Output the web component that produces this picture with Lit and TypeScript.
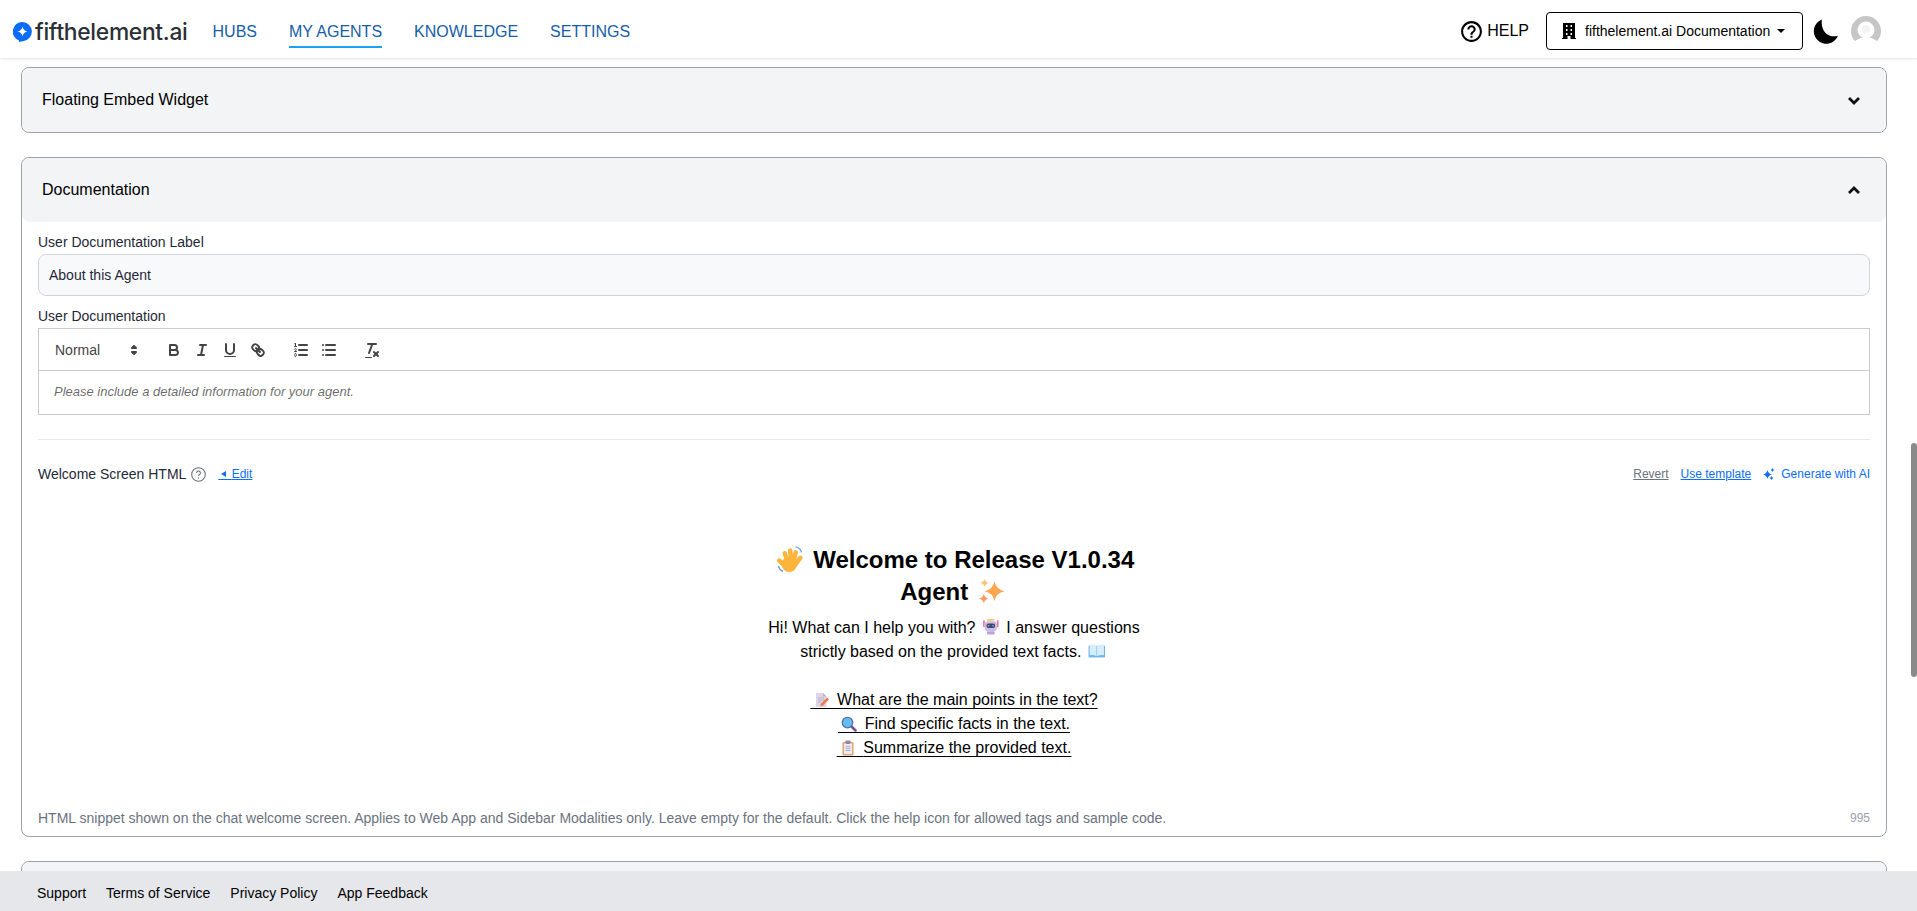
import { LitElement, html, css } from "lit";
import { customElement } from "lit/decorators.js";

const star = (cx: number, cy: number, r: number) => {
  const k = r * 0.16;
  return `M${cx} ${cy - r}Q${cx + k} ${cy - k} ${cx + r} ${cy}Q${cx + k} ${cy + k} ${cx} ${cy + r}Q${cx - k} ${cy + k} ${cx - r} ${cy}Q${cx - k} ${cy - k} ${cx} ${cy - r}Z`;
};

const waveEmoji = html`<svg viewBox="2 1 28 29">
  <g fill="none" stroke="#fbb53c" stroke-width="5" stroke-linecap="round">
    <path d="M9 22 4 17M13 17 10 9M17 16 16 6M20 17 22 8M22 21 27 14" />
  </g>
  <circle cx="15" cy="21" r="8.5" fill="#fbb53c" />
  <path d="M22 2q5 1 6.5 6M3 23q1 4 5 6" fill="none" stroke="#6fa8dc" stroke-width="1.6" />
</svg>`;

const sparkleEmoji = html`<svg viewBox="0 0 32 32">
  <path d=${star(20, 16, 12)} fill="#ffa64d" />
  <path d=${star(8, 6, 5)} fill="#ffc46b" />
  <path d=${star(7, 25, 6)} fill="#ff9a66" />
</svg>`;

const robotEmoji = html`<svg viewBox="0 0 32 32">
  <rect x="2" y="4" width="3" height="13" rx="1.5" fill="#ef6c9b" />
  <rect x="27" y="4" width="3" height="13" rx="1.5" fill="#ef6c9b" />
  <rect x="9" y="2" width="14" height="3" rx="1.5" fill="#f5c95c" />
  <rect x="5" y="6" width="22" height="18" rx="6" fill="#cdbbe6" />
  <rect x="8" y="10" width="16" height="8" rx="4" fill="#3d4a6b" />
  <circle cx="12" cy="14" r="1.4" fill="#7fd0f5" />
  <circle cx="20" cy="14" r="1.4" fill="#7fd0f5" />
  <rect x="9" y="24" width="14" height="6" rx="2" fill="#b8a6d8" />
</svg>`;

const bookEmoji = html`<svg viewBox="0 0 32 32">
  <path d="M1 7h30v21H1z" fill="#6fb4ea" />
  <path d="M3 5q8-1 12.5 2v19Q11 23 3 24zM29 5q-8-1-12.5 2v19q4.500-3 12.500-2z" fill="#d6edfb" />
</svg>`;

const memoEmoji = html`<svg viewBox="0 0 32 32">
  <path d="M6 2h14l7 7v21H6z" fill="#dcd6e8" />
  <path d="M20 2v7h7z" fill="#b9afd0" />
  <path d="M10 12h12M10 16h12M10 20h6" stroke="#b0a8c4" stroke-width="1.5" />
  <path d="M30 13 16 27" stroke="#f4794a" stroke-width="5" />
  <path d="m13 30 1.500-5 3.500 3.500z" fill="#f7c59f" />
</svg>`;

const searchEmoji = html`<svg viewBox="0 0 32 32">
  <path d="m20 20 9 9" stroke="#76508f" stroke-width="5" stroke-linecap="round" />
  <circle cx="13" cy="13" r="10.500" fill="#62bdf0" stroke="#5d6fa8" stroke-width="2.500" />
</svg>`;

const clipboardEmoji = html`<svg viewBox="0 0 32 32">
  <rect x="5" y="4" width="22" height="27" rx="2" fill="#e3a36f" />
  <rect x="8" y="7" width="16" height="21" fill="#eceaf2" />
  <rect x="11" y="1" width="10" height="7" rx="2" fill="#8d8aa0" />
  <path d="M11 13h10M11 17h10M11 21h10" stroke="#9a98b0" stroke-width="1.500" />
</svg>`;

const chevronDown = html`<svg class="chevron" viewBox="0 0 14 9"><path d="m2 2 5 5 5-5" /></svg>`;
const chevronUp = html`<svg class="chevron" viewBox="0 0 14 9"><path d="m2 7 5-5 5 5" /></svg>`;

@customElement("app-root")
export class AppRoot extends LitElement {
  static override styles = css`
    :host {
      display: flex;
      flex-direction: column;
      height: 100vh;
      overflow: hidden;
      font-family: "Liberation Sans", Arial, sans-serif;
      font-size: 14px;
      color: #000;
      background: #fff;
    }

    /* top bar */
    .topbar {
      flex: none;
      height: 58px;
      display: flex;
      align-items: center;
      background: #fff;
      box-shadow: 0 1px 3px rgba(0, 0, 0, 0.12);
      position: relative;
      z-index: 2;
    }
    .logo {
      display: flex;
      align-items: center;
      margin: 5px 0 0 13px;
      gap: 3px;
      font-family: Inter, sans-serif;
      font-size: 22.8px;
      font-weight: 500;
      letter-spacing: -0.3px;
      color: #2b2f36;
    }
    .logo svg {
      width: 19px;
      height: 20px;
    }
    .nav {
      display: flex;
      gap: 32px;
      margin-left: 25px;
      font-size: 16px;
      color: #155ea8;
    }
    .nav span {
      padding: 5px 0;
      border-bottom: 2px solid transparent;
      margin-top: 8px;
    }
    .nav span.active {
      border-bottom-color: #1da1f2;
    }
    .top-right {
      margin: 4px 36px 0 auto;
      display: flex;
      align-items: center;
    }
    .help {
      display: flex;
      align-items: center;
      font-size: 16px;
      gap: 3px;
      margin-right: 17px;
    }
    .help svg {
      width: 25px;
      height: 25px;
    }
    .org {
      box-sizing: border-box;
      width: 257px;
      height: 38px;
      display: flex;
      align-items: center;
      padding-left: 15px;
      gap: 9px;
      border: 1px solid #000;
      border-radius: 4px;
      font-size: 14px;
    }
    .org svg.building {
      width: 14px;
      height: 16px;
    }
    .caret {
      width: 0;
      height: 0;
      border-left: 4.5px solid transparent;
      border-right: 4.5px solid transparent;
      border-top: 4.5px solid #000;
      margin-left: -2px;
    }
    .moon {
      width: 25px;
      height: 25px;
      margin: 0 13px 0 10px;
    }
    .avatar {
      width: 30px;
      height: 30px;
    }

    /* scrolled content */
    .content {
      flex: 1;
      min-height: 0;
      overflow: hidden;
      position: relative;
      padding: 9px 30px 0 21px;
    }
    .thumb {
      position: absolute;
      right: 0;
      top: 385px;
      width: 6px;
      height: 234px;
      border-radius: 3px;
      background: #8a8a8a;
    }
    .card {
      border: 1px solid #9ca3af;
      border-radius: 8px;
      margin-bottom: 24px;
    }
    .card-head {
      height: 64px;
      display: flex;
      align-items: center;
      justify-content: space-between;
      padding: 0 25px 0 20px;
      background: #f3f4f6;
      border-radius: 8px;
      font-size: 16px;
    }
    .chevron {
      width: 14px;
      height: 9px;
      fill: none;
      stroke: #111;
      stroke-width: 2.8;
    }
    .card-body {
      padding: 11px 16px 9px;
    }

    /* form fields */
    .label {
      line-height: 18px;
      margin-bottom: 3px;
      color: #1f2937;
    }
    .input {
      box-sizing: border-box;
      height: 42px;
      display: flex;
      align-items: center;
      padding: 0 10px;
      margin-bottom: 11px;
      background: #f8f9fb;
      border: 1px solid #d1d5db;
      border-radius: 8px;
      color: #1f2937;
    }
    .editor {
      border: 1px solid #ccc;
    }
    .toolbar {
      display: flex;
      align-items: center;
      padding: 9px 8px 8px;
      border-bottom: 1px solid #ccc;
    }
    .picker {
      width: 98px;
      height: 24px;
      display: flex;
      align-items: center;
      justify-content: space-between;
      padding: 0 2px 0 8px;
      box-sizing: border-box;
      color: #444;
    }
    .tool-group {
      display: flex;
      margin-left: 15px;
    }
    .tool {
      width: 28px;
      height: 24px;
      padding: 3px 5px;
      box-sizing: border-box;
    }
    .tool svg,
    .picker svg {
      display: block;
      width: 18px;
      height: 18px;
    }
    .ql-stroke {
      fill: none;
      stroke: #444;
      stroke-width: 2;
      stroke-linecap: round;
      stroke-linejoin: round;
    }
    .ql-thin {
      stroke-width: 1;
    }
    .ql-fill {
      fill: #444;
      stroke: none;
    }
    .ql-even {
      fill-rule: evenodd;
    }
    .placeholder {
      padding: 11px 15px 13px;
      font-size: 13px;
      line-height: 19px;
      font-style: italic;
      color: rgba(0, 0, 0, 0.6);
    }
    .divider {
      height: 1px;
      background: #e5e7eb;
      margin: 24px 0;
    }

    /* welcome screen row */
    .welcome-row {
      height: 20px;
      display: flex;
      align-items: center;
      font-size: 12px;
    }
    .welcome-title {
      font-size: 14px;
      color: #1f2937;
      margin-right: 5px;
    }
    .q-icon {
      width: 15px;
      height: 15px;
      margin-right: 12px;
    }
    .actions {
      margin-left: auto;
      display: flex;
      align-items: center;
      gap: 12px;
    }
    .blue {
      color: #0d6efd;
    }
    .under {
      text-decoration: underline;
    }
    .muted {
      color: #6b7280;
    }
    .generate {
      display: flex;
      align-items: center;
      gap: 6px;
    }
    .generate svg {
      width: 12px;
      height: 12px;
    }

    /* gap that carries an underline with a picture lying on it */
    .slot {
      position: relative;
    }
    .slot svg {
      position: absolute;
      left: 3px;
      top: 1px;
      width: 16px;
      height: 16px;
    }
    .slot svg.tri {
      left: 3px;
      top: 4px;
      width: 5px;
      height: 6px;
    }

    /* html preview */
    .preview {
      width: 400px;
      margin: 60px auto 49px;
      text-align: center;
      font-size: 16px;
      line-height: 24px;
    }
    .preview h2 {
      margin: 0 0 8px;
      font-size: 24px;
      line-height: 32px;
      font-weight: 700;
    }
    .emoji {
      display: inline-block;
      width: 1.37em;
      height: 1em;
      vertical-align: -0.12em;
    }
    .emoji svg {
      display: block;
      width: 1.1em;
      height: 1.1em;
      margin: -0.05em auto;
    }
    .preview a {
      color: #000;
      text-decoration: underline;
      text-underline-offset: 3px;
    }

    .hint-row {
      display: flex;
      justify-content: space-between;
      align-items: center;
      line-height: 18px;
      font-size: 14px;
      color: #6b7280;
    }
    .count {
      font-size: 12px;
      color: #9ca3af;
    }

    .footer {
      flex: none;
      box-sizing: border-box;
      height: 40px;
      display: flex;
      align-items: center;
      gap: 20px;
      padding: 4px 0 0 37px;
      background: #e5e7eb;
      position: relative;
      z-index: 1;
    }
  `;

  private toolbar() {
    return html`<div class="toolbar">
      <div class="picker">
        <span>Normal</span>
        <svg viewBox="0 0 18 18">
          <polygon class="ql-stroke" points="7 11 9 13 11 11 7 11"></polygon>
          <polygon class="ql-stroke" points="7 7 9 5 11 7 7 7"></polygon>
        </svg>
      </div>
      <div class="tool-group">
        <div class="tool">
          <svg viewBox="0 0 18 18">
            <path class="ql-stroke" d="M5,4H9.5A2.5,2.5,0,0,1,12,6.5v0A2.5,2.5,0,0,1,9.5,9H5A0,0,0,0,1,5,9V4A0,0,0,0,1,5,4Z"></path>
            <path class="ql-stroke" d="M5,9h5.5A2.5,2.5,0,0,1,13,11.5v0A2.5,2.5,0,0,1,10.5,14H5a0,0,0,0,1,0,0V9A0,0,0,0,1,5,9Z"></path>
          </svg>
        </div>
        <div class="tool">
          <svg viewBox="0 0 18 18">
            <line class="ql-stroke" x1="7" x2="13" y1="4" y2="4"></line>
            <line class="ql-stroke" x1="5" x2="11" y1="14" y2="14"></line>
            <line class="ql-stroke" x1="8" x2="10" y1="14" y2="4"></line>
          </svg>
        </div>
        <div class="tool">
          <svg viewBox="0 0 18 18">
            <path class="ql-stroke" d="M5,3V9a4.012,4.012,0,0,0,4,4H9a4.012,4.012,0,0,0,4-4V3"></path>
            <rect class="ql-fill" height="1" rx="0.5" ry="0.5" width="12" x="3" y="15"></rect>
          </svg>
        </div>
        <div class="tool">
          <svg viewBox="0 0 18 18">
            <line class="ql-stroke" x1="7" x2="11" y1="7" y2="11"></line>
            <path class="ql-even ql-stroke" d="M8.9,4.577a3.476,3.476,0,0,1,.36,4.679A3.476,3.476,0,0,1,4.577,8.9C3.185,7.5,2.035,6.4,4.217,4.217S7.5,3.185,8.9,4.577Z"></path>
            <path class="ql-even ql-stroke" d="M13.423,9.1a3.476,3.476,0,0,0-4.679-.36,3.476,3.476,0,0,0,.36,4.679c1.392,1.392,2.5,2.542,4.679.36S14.815,10.5,13.423,9.1Z"></path>
          </svg>
        </div>
      </div>
      <div class="tool-group">
        <div class="tool">
          <svg viewBox="0 0 18 18">
            <line class="ql-stroke" x1="7" x2="15" y1="4" y2="4"></line>
            <line class="ql-stroke" x1="7" x2="15" y1="9" y2="9"></line>
            <line class="ql-stroke" x1="7" x2="15" y1="14" y2="14"></line>
            <line class="ql-stroke ql-thin" x1="2.5" x2="4.5" y1="5.5" y2="5.5"></line>
            <path class="ql-fill" d="M3.5,6A0.5,0.5,0,0,1,3,5.5V3.085l-0.276.138A0.5,0.5,0,0,1,2.053,3c-0.124-.247-0.023-0.324.224-0.447l1-.5A0.5,0.5,0,0,1,4,2.5v3A0.5,0.5,0,0,1,3.5,6Z"></path>
            <path class="ql-stroke ql-thin" d="M4.5,10.5h-2c0-.234,1.85-1.076,1.85-2.234A0.959,0.959,0,0,0,2.5,8.156"></path>
            <path class="ql-stroke ql-thin" d="M2.5,14.846a0.959,0.959,0,0,0,1.85-.109A0.7,0.7,0,0,0,3.75,14a0.688,0.688,0,0,0,.6-0.736,0.959,0.959,0,0,0-1.85-.109"></path>
          </svg>
        </div>
        <div class="tool">
          <svg viewBox="0 0 18 18">
            <line class="ql-stroke" x1="6" x2="15" y1="4" y2="4"></line>
            <line class="ql-stroke" x1="6" x2="15" y1="9" y2="9"></line>
            <line class="ql-stroke" x1="6" x2="15" y1="14" y2="14"></line>
            <line class="ql-stroke" x1="3" x2="3" y1="4" y2="4"></line>
            <line class="ql-stroke" x1="3" x2="3" y1="9" y2="9"></line>
            <line class="ql-stroke" x1="3" x2="3" y1="14" y2="14"></line>
          </svg>
        </div>
      </div>
      <div class="tool-group">
        <div class="tool">
          <svg viewBox="0 0 18 18">
            <line class="ql-stroke" x1="5" x2="13" y1="3" y2="3"></line>
            <line class="ql-stroke" x1="6" x2="9.35" y1="12" y2="3"></line>
            <line class="ql-stroke" x1="11" x2="15" y1="11" y2="15"></line>
            <line class="ql-stroke" x1="15" x2="11" y1="11" y2="15"></line>
            <rect class="ql-fill" height="1" rx="0.5" ry="0.5" width="7" x="2" y="16"></rect>
          </svg>
        </div>
      </div>
    </div>`;
  }

  private preview() {
    return html`<div class="preview">
      <h2><span class="emoji">${waveEmoji}</span> Welcome to Release V1.0.34 Agent <span class="emoji">${sparkleEmoji}</span></h2>
      <div>
        Hi! What can I help you with? <span class="emoji">${robotEmoji}</span> I answer questions<br />strictly based on
        the provided text facts. <span class="emoji">${bookEmoji}</span>
      </div>
      <br />
      <a><span class="slot">&nbsp;&nbsp;&nbsp;&nbsp;&nbsp;&nbsp;${memoEmoji}</span>What are the main points in the text?</a><br />
      <a><span class="slot">&nbsp;&nbsp;&nbsp;&nbsp;&nbsp;&nbsp;${searchEmoji}</span>Find specific facts in the text.</a><br />
      <a><span class="slot">&nbsp;&nbsp;&nbsp;&nbsp;&nbsp;&nbsp;${clipboardEmoji}</span>Summarize the provided text.</a>
    </div>`;
  }

  override render() {
    return html`
      <header class="topbar">
        <div class="logo">
          <svg viewBox="0 0 19 20">
            <path
              d="M9.500 0a9.500 9.500 0 0 1 1.200 18.900L6 20v-1.600A9.500 9.500 0 0 1 9.500 0Z"
              fill="#0b6bfb"
            />
            <path d=${star(9.5, 9.5, 5)} fill="#fff" />
          </svg>
          <span>fifthelement.ai</span>
        </div>
        <nav class="nav">
          <span>HUBS</span>
          <span class="active">MY AGENTS</span>
          <span>KNOWLEDGE</span>
          <span>SETTINGS</span>
        </nav>
        <div class="top-right">
          <div class="help">
            <svg viewBox="0 0 24 24">
              <path
                d="M11 18h2v-2h-2v2zm1-16C6.480 2 2 6.480 2 12s4.480 10 10 10 10-4.480 10-10S17.520 2 12 2zm0 18c-4.410 0-8-3.590-8-8s3.590-8 8-8 8 3.590 8 8-3.590 8-8 8zm0-14c-2.210 0-4 1.790-4 4h2c0-1.100.9-2 2-2s2 .9 2 2c0 2-3 1.750-3 5h2c0-2.250 3-2.500 3-5 0-2.210-1.790-4-4-4z"
              />
            </svg>
            <span>HELP</span>
          </div>
          <div class="org">
            <svg class="building" viewBox="0 0 14 16">
              <path
                fill-rule="evenodd"
                d="M1 0h12v15h1v1H8.500v-3h-3v3H0v-1h1ZM4 2v2h1.500V2Zm4.500 0v2H10V2ZM4 6v2h1.500V6Zm4.500 0v2H10V6ZM4 10v2h1.500v-2Zm4.500 0v2H10v-2Z"
              />
            </svg>
            <span>fifthelement.ai Documentation</span>
            <span class="caret"></span>
          </div>
          <svg class="moon" viewBox="0 0 24 24">
            <path d="M8.500.5A12 12 0 1 0 24 16C17 18.500 7 14 8.500.5Z" />
          </svg>
          <svg class="avatar" viewBox="0 0 30 30">
            <circle cx="15" cy="15" r="15" fill="#c6c6c6" />
            <circle cx="15" cy="14" r="8.500" fill="#fff" />
            <circle cx="15" cy="13" r="4" fill="#f4f4f4" />
            <path d="M3 26q12-10 24 0v4H3Z" fill="#fff" />
          </svg>
        </div>
      </header>

      <main class="content">
        <section class="card">
          <div class="card-head"><span>Floating Embed Widget</span>${chevronDown}</div>
        </section>

        <section class="card">
          <div class="card-head"><span>Documentation</span>${chevronUp}</div>
          <div class="card-body">
            <div class="label">User Documentation Label</div>
            <div class="input">About this Agent</div>
            <div class="label">User Documentation</div>
            <div class="editor">
              ${this.toolbar()}
              <div class="placeholder">Please include a detailed information for your agent.</div>
            </div>
            <div class="divider"></div>
            <div class="welcome-row">
              <span class="welcome-title">Welcome Screen HTML</span>
              <svg class="q-icon" viewBox="0 0 15 15">
                <circle cx="7.500" cy="7.500" r="6.800" fill="none" stroke="#6b7280" stroke-width="1.100" />
                <path
                  d="M5.600 5.900a1.900 1.900 0 1 1 2.900 1.700c-.7.4-1 .8-1 1.500"
                  fill="none"
                  stroke="#6b7280"
                  stroke-width="1.100"
                />
                <circle cx="7.500" cy="11" r=".7" fill="#6b7280" />
              </svg>
              <span class="blue under"
                ><span class="slot"
                  >&nbsp;&nbsp;&nbsp;&nbsp;<svg class="tri" viewBox="0 0 5 6"><path d="M5 0v6L0 3Z" fill="#0d6efd" /></svg></span
                >Edit</span
              >
              <div class="actions">
                <span class="muted under">Revert</span>
                <span class="blue under">Use template</span>
                <span class="blue generate">
                  <svg viewBox="0 0 12 12">
                    <path d=${star(4.5, 6.5, 4.5)} fill="#0d6efd" />
                    <path d=${star(9.5, 2, 2)} fill="#0d6efd" />
                    <path d=${star(8.5, 10, 2)} fill="#0d6efd" />
                  </svg>
                  Generate with AI
                </span>
              </div>
            </div>
            ${this.preview()}
            <div class="hint-row">
              <span
                >HTML snippet shown on the chat welcome screen. Applies to Web App and Sidebar Modalities only. Leave
                empty for the default. Click the help icon for allowed tags and sample code.</span
              >
              <span class="count">995</span>
            </div>
          </div>
        </section>

        <section class="card">
          <div class="card-head"></div>
        </section>

        <div class="thumb"></div>
      </main>

      <footer class="footer">
        <span>Support</span>
        <span>Terms of Service</span>
        <span>Privacy Policy</span>
        <span>App Feedback</span>
      </footer>
    `;
  }
}
